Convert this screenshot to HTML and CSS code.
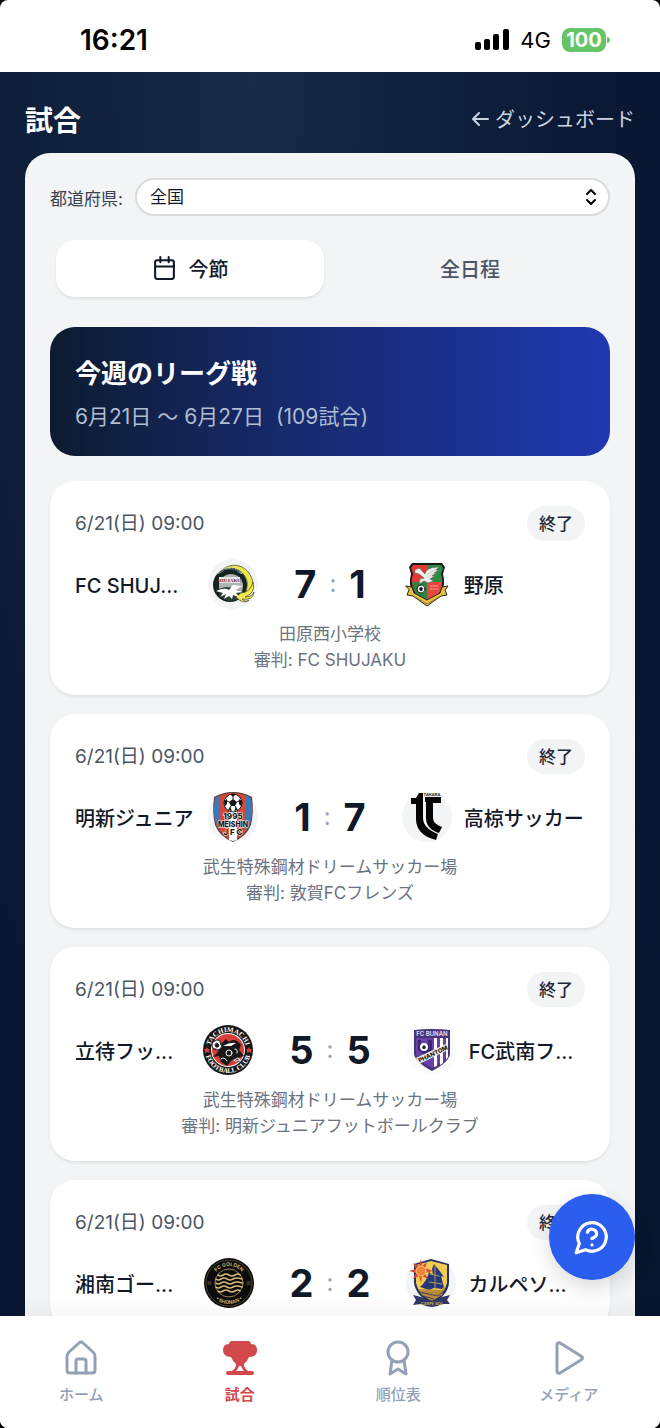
FILE: index.html
```html
<!DOCTYPE html>
<html lang="ja">
  <head>
    <meta charset="UTF-8" />
    <meta name="viewport" content="width=device-width, initial-scale=1.0" />
    <title>試合</title>
    <link rel="stylesheet" href="styles.css">
  </head>
  <body>
    <div class="screen">
      <div class="status-bar">
        <span class="clock">16:21</span>
        <div class="status-icons">
          <svg class="signal" viewBox="0 0 34 22" aria-hidden="true">
            <rect x="0" y="13" width="6" height="8" rx="2" />
            <rect x="9" y="10" width="6" height="11" rx="2" />
            <rect x="18" y="5" width="6" height="16" rx="2" />
            <rect x="28" y="0" width="6" height="21" rx="2" />
          </svg>
          <span class="network">4G</span>
          <span class="battery">100</span>
        </div>
      </div>

      <div class="app">
        <header class="page-header">
          <h1>試合</h1>
          <a href="#" class="back-link">
            <svg viewBox="0 0 18 18" aria-hidden="true"><path d="M17 9H2M8 3L2 9l6 6" /></svg>
            ダッシュボード
          </a>
        </header>

        <main class="sheet">
          <div class="filter">
            <label for="prefecture">都道府県:</label>
            <div class="select-wrap">
              <select id="prefecture">
                <option>全国</option>
              </select>
              <svg viewBox="0 0 12 18" aria-hidden="true"><path d="M2 6l4-4 4 4M2 12l4 4 4-4" /></svg>
            </div>
          </div>

          <div class="tabs">
            <button type="button" class="tab active">
              <svg viewBox="0 0 24 24" aria-hidden="true">
                <rect x="3" y="4" width="18" height="18" rx="2" />
                <path d="M8 1v5M16 1v5M3 10h18" />
              </svg>
              今節
            </button>
            <button type="button" class="tab">全日程</button>
          </div>

          <section class="hero">
            <h2>今週のリーグ戦</h2>
            <p><span>6月21日 〜 6月27日</span><span>(109試合)</span></p>
          </section>

          <div class="matches">
            <article class="match">
              <div class="match-top">
                <time>6/21(日) 09:00</time>
                <span class="badge">終了</span>
              </div>
              <div class="match-row">
                <div class="team home">
                  <span class="name">FC SHUJ...</span>
                  <svg class="crest" viewBox="0 0 50 50" aria-hidden="true">
                    <defs><path id="arc1" d="M10 17A14 14 0 0 1 34 17" /></defs>
                    <circle cx="25" cy="25" r="25" fill="#f3f4f6" />
                    <path d="M10 16C16 5 32 2 41 14C48 24 45 34 35 36C42 28 40 18 32 12C24 7 16 9 10 16Z" fill="#ede64a" stroke="#3c3d20" stroke-width=".7" />
                    <circle cx="22" cy="26" r="17" fill="#17231f" />
                    <circle cx="23" cy="27" r="12" fill="#aeb4b1" />
                    <path d="M10 31Q16 26 25 29L36 34Q31 42 22 42Q13 41 10 31Z" fill="#2c3f39" />
                    <path d="M33 34Q42 34 45 23Q48 34 37 38Q44 38 46 33Q45 42 34 40Q39 44 41 41Q35 46 28 38Z" fill="#f0e84f" stroke="#44451d" stroke-width=".7" />
                    <path d="M8 32Q17 28 21 31L25 26L34 27L28 31L35 33L28 34L31 38L25 36L24 40L21 37L16 40L18 35L12 38L15 34Z" fill="#fff" />
                    <rect x="11" y="18" width="21" height="6" fill="#e8e5e8" />
                    <text x="21" y="23" font-size="5" font-weight="700" text-anchor="middle" fill="#6b1f35" class="serif">SHUJAKU</text>
                    <text font-size="3" fill="#d8dcda" font-weight="700" text-anchor="middle"><textPath href="#arc1" startOffset="50%">FOOTBALL CLUB</textPath></text>
                  </svg>
                </div>
                <div class="score"><b>7</b><i>:</i><b>1</b></div>
                <div class="team">
                  <svg class="crest" viewBox="0 0 50 50" aria-hidden="true">
                    <path d="M10 4H40L43 8L41 15Q44 26 39 34Q35 40 25 46Q15 40 11 34Q6 26 9 15L7 8Z" fill="#151a17" />
                    <path d="M11 6H25V43Q14 37 12 31Q8 23 11 15L9 9Z" fill="#df3930" />
                    <path d="M25 6H39L41 9L39 15Q42 23 38 32L25 43Z" fill="#2f8a43" />
                    <path d="M10 23H25V43Q14 37 12 31Z" fill="#2d8441" />
                    <path d="M25 23H40Q40 30 37 34L25 43Z" fill="#e6473a" />
                    <path d="M4 27L10 28L12 34L25 41L38 34L40 28L46 27L43 31L45 36L39 37L25 47L11 37L5 36L7 31Z" fill="#e9c14a" stroke="#29251a" stroke-width="1" />
                    <path d="M13 38L25 45L37 38" fill="none" stroke="#947021" stroke-width="1" stroke-dasharray="2 1" />
                    <path d="M13 11Q18 7 20 12L23 15Q24 8 37 8L34 11H37L32 14H35L30 17H33L28 20L32 22L26 24L22 22L17 25L18 20L22 19L17 15L13 14Z" fill="#eee" stroke="#59615c" stroke-width=".6" />
                    <path d="M25 16L34 10M26 18L33 14" stroke="#a8b0ac" stroke-width=".6" />
                    <circle cx="19" cy="30" r="4" fill="#fff" stroke="#151a17" />
                    <path d="M19 28L21 29L20 32H18L17 29Z" fill="#151a17" />
                    <path d="M28 27H37M28 30H36" stroke="#f4a69c" stroke-dasharray="2 1" />
                  </svg>
                  <span class="name">野原</span>
                </div>
              </div>
              <p class="venue">田原西小学校<br>審判: FC SHUJAKU</p>
            </article>

            <article class="match">
              <div class="match-top">
                <time>6/21(日) 09:00</time>
                <span class="badge">終了</span>
              </div>
              <div class="match-row">
                <div class="team home">
                  <span class="name">明新ジュニア</span>
                  <svg class="crest" viewBox="0 0 50 50" aria-hidden="true">
                    <circle cx="25" cy="25" r="25" fill="#f3f4f6" />
                    <path d="M25 0Q35 0 44 5Q46 20 43 33Q38 45 25 50Q12 45 7 33Q4 20 6 5Q15 0 25 0Z" fill="#5a3d36" />
                    <path d="M25 1Q34 1 43 6Q45 20 42 32Q37 44 25 49Q13 44 8 32Q5 20 7 6Q16 1 25 1Z" fill="#d4473a" />
                    <path d="M7 6L12 3V39Q5 29 6 16Z" fill="#3c78b8" />
                    <path d="M43 6L38 3V39Q45 29 44 16Z" fill="#3c78b8" />
                    <path d="M21 18H29V48L25 49L21 48Z" fill="#fff" />
                    <circle cx="25" cy="11" r="9" fill="#fff" stroke="#171717" />
                    <path d="M25 7L29 10L27 14H23L21 10ZM22 2H28L25 5ZM16 9L19 7V12L17 14ZM34 9L31 7V12L33 14ZM20 18L22 15L24 19ZM30 18L28 15L26 19Z" fill="#151515" />
                    <path d="M25 5V7M19 9L21 10M31 9L29 10M23 14L22 16M27 14L28 16" stroke="#151515" />
                    <g font-weight="800" text-anchor="middle" fill="#161616" stroke="#fff" stroke-width="1" paint-order="stroke">
                      <text x="25" y="27" font-size="8">1995</text>
                      <text x="25" y="35" font-size="7">MEISHIN</text>
                      <text x="25" y="43" font-size="8">J F C</text>
                    </g>
                  </svg>
                </div>
                <div class="score"><b>1</b><i>:</i><b>7</b></div>
                <div class="team">
                  <svg class="crest" viewBox="0 0 50 50" aria-hidden="true">
                    <circle cx="25" cy="25" r="25" fill="#f3f4f6" />
                    <path d="M9 6H14L17 1H21V26Q21 36 36 42L34 48Q14 43 14 27V12H9Z" fill="#050505" />
                    <path d="M23 5H39V11H31V26Q31 32 40 35L37 41Q24 37 24 26V10H23Z" fill="#050505" />
                    <text x="30" y="4" font-size="4" font-weight="700" text-anchor="middle" fill="#222">TAKARA</text>
                  </svg>
                  <span class="name">高椋サッカー</span>
                </div>
              </div>
              <p class="venue">武生特殊鋼材ドリームサッカー場<br>審判: 敦賀FCフレンズ</p>
            </article>

            <article class="match">
              <div class="match-top">
                <time>6/21(日) 09:00</time>
                <span class="badge">終了</span>
              </div>
              <div class="match-row">
                <div class="team home">
                  <span class="name">立待フッ...</span>
                  <svg class="crest" viewBox="0 0 50 50" aria-hidden="true">
                    <defs>
                      <path id="arc2" d="M7 25A18 18 0 0 1 43 25" />
                      <path id="arc3" d="M2 25A23 23 0 0 0 48 25" />
                    </defs>
                    <circle cx="25" cy="25" r="25" fill="#171717" />
                    <circle cx="25" cy="25" r="17" fill="#fff" />
                    <circle cx="25" cy="25" r="16" fill="#d93d38" />
                    <g font-size="7" font-weight="800" fill="#fff" text-anchor="middle" class="serif">
                      <text><textPath href="#arc2" startOffset="50%">TACHIMACHI</textPath></text>
                      <text><textPath href="#arc3" startOffset="50%">FOOTBALL CLUB</textPath></text>
                    </g>
                    <path d="M4 22L5 24H7L6 26L7 28L4 27L2 28V26L1 24H3ZM46 22L47 24H49L48 26L49 28L46 27L44 28V26L43 24H45Z" fill="#df3d38" />
                    <path d="M17 20L23 14L26 17Q32 12 38 20L36 25L41 31L34 33L37 37L29 35L24 41L18 37L16 31L10 32L15 27Z" fill="#181818" />
                    <circle cx="14" cy="20" r="5" fill="#fff" stroke="#181818" />
                    <path d="M14 18L16 20L15 22H13L12 20ZM10 17L12 16M17 17L18 20M11 24L13 24" fill="#181818" stroke="#181818" />
                    <path d="M20 21Q27 17 33 18L28 21Z" fill="#fff" />
                    <circle cx="26" cy="28" r="3" fill="#181818" stroke="#fff" />
                    <path d="M32 24Q35 24 34 28M18 34Q21 31 24 36M31 35L35 33L37 35L33 36Z" fill="none" stroke="#fff" />
                  </svg>
                </div>
                <div class="score"><b>5</b><i>:</i><b>5</b></div>
                <div class="team">
                  <svg class="crest" viewBox="0 0 50 50" aria-hidden="true">
                    <circle cx="25" cy="25" r="25" fill="#f9fafb" />
                    <path d="M7 5Q25 3 43 5V29Q42 37 25 46Q8 37 7 29Z" fill="#4a3479" />
                    <path d="M9 13H41V29Q40 35 25 43Q10 35 9 29Z" fill="#6940a7" />
                    <path d="M27 13H30V41L27 42ZM33 13H36V38L33 40ZM39 13H41V32L39 35Z" fill="#fff" />
                    <path d="M11 15H14V19H21V15H25V25L18 30L11 25Z" fill="#3b2675" />
                    <circle cx="17" cy="22" r="4" fill="#fff" />
                    <path d="M17 20L19 22L18 24H16L15 22Z" fill="#222" />
                    <path d="M9 33L41 18V25L12 39Z" fill="#f5f0ef" />
                    <text x="25" y="11" font-size="6" font-weight="700" text-anchor="middle" fill="#ded5ec">FC BUNAN</text>
                    <text x="26" y="31" font-size="6" font-weight="800" text-anchor="middle" fill="#202020" transform="rotate(-25 26 29)">PHANTOM</text>
                  </svg>
                  <span class="name">FC武南フ...</span>
                </div>
              </div>
              <p class="venue">武生特殊鋼材ドリームサッカー場<br>審判: 明新ジュニアフットボールクラブ</p>
            </article>

            <article class="match">
              <div class="match-top">
                <time>6/21(日) 09:00</time>
                <span class="badge">終了</span>
              </div>
              <div class="match-row">
                <div class="team home">
                  <span class="name">湘南ゴー...</span>
                  <svg class="crest" viewBox="0 0 50 50" aria-hidden="true">
                    <defs>
                      <path id="arc4" d="M8 25A17 17 0 0 1 42 25" />
                      <path id="arc5" d="M4 25A21 21 0 0 0 46 25" />
                    </defs>
                    <circle cx="25" cy="25" r="25" fill="#0b0b0b" />
                    <circle cx="25" cy="25" r="23" fill="none" stroke="#6d5c36" stroke-width=".7" />
                    <circle cx="25" cy="25" r="14" fill="none" stroke="#c2a162" stroke-width=".8" />
                    <path d="M14 17Q16 19 19 17T25 17T31 17T36 17M12 21Q14 23 17 21T23 21T29 21T38 21M12 25Q14 27 17 25T23 25T29 25T38 25M12 29Q14 31 17 29T23 29T29 29T38 29M14 33Q16 35 19 33T25 33T31 33T36 33" fill="none" stroke="#d7b979" stroke-width="1.6" />
                    <g font-size="5" font-weight="700" fill="#cfb06e" text-anchor="middle">
                      <text><textPath href="#arc4" startOffset="50%">FC GOLDEN</textPath></text>
                      <text><textPath href="#arc5" startOffset="50%">• SHONAN •</textPath></text>
                    </g>
                    <path d="M4 24H7M4 26H7M43 24H46M43 26H46" stroke="#7d6b42" stroke-width=".8" />
                  </svg>
                </div>
                <div class="score"><b>2</b><i>:</i><b>2</b></div>
                <div class="team">
                  <svg class="crest" viewBox="0 0 50 50" aria-hidden="true">
                    <circle cx="25" cy="25" r="25" fill="#f3f4f6" />
                    <path d="M8 6L25 1L43 6V25Q42 37 26 46Q10 38 8 25Z" fill="#25305f" />
                    <path d="M10 7L25 3L41 7V25Q39 35 26 43Q12 36 10 25Z" fill="#f3cd51" />
                    <path d="M28 6L33 12L38 19L35 18L38 29L36 31L28 30L23 32L14 29Q21 23 23 14L27 17L26 11Z" fill="#26387b" />
                    <path d="M29 7V35M23 24L36 26M24 16L33 18" stroke="#d0b24e" stroke-width=".8" />
                    <path d="M12 31L35 32L40 28L36 37L26 43L16 37Z" fill="#bc8b31" />
                    <path d="M13 34L32 38L38 33M17 38L28 41" stroke="#36406c" stroke-width="1" fill="none" />
                    <path d="M15 1L16 8L21 4L19 10L27 13L19 15L22 21L16 18L15 25L13 18L7 21L10 15L3 13L10 11L7 5L13 8Z" fill="#dc4637" />
                    <circle cx="15" cy="13" r="5" fill="#ef853c" stroke="#f7d36a" stroke-width="1" />
                    <path d="M7 37L15 39Q26 46 36 39L44 37L41 42L44 46L36 46Q26 52 15 46L7 47L10 42Z" fill="#303963" />
                    <text x="26" y="47" font-size="4" font-weight="700" text-anchor="middle" fill="#c8a64f">CARPE SOL</text>
                  </svg>
                  <span class="name">カルペソ...</span>
                </div>
              </div>
            </article>
          </div>
        </main>
      </div>

      <button type="button" class="help" aria-label="ヘルプ">
        <svg viewBox="0 0 24 24" aria-hidden="true">
          <path d="M7.9 20A9 9 0 1 0 4 16.1L2 22Z" />
          <path d="M9.1 9a3 3 0 0 1 5.8 1c0 2-3 3-3 3M12 17h.01" />
        </svg>
      </button>

      <nav class="bottom-nav">
        <a href="#">
          <svg viewBox="0 0 38 38" aria-hidden="true">
            <path d="M5 17Q5 15 7 13L17 4Q19 2 21 4L31 13Q33 15 33 17V31Q33 34 30 34H8Q5 34 5 31Z" />
            <path d="M14 34V22Q14 20 16 20H22Q24 20 24 22V34" />
          </svg>
          ホーム
        </a>
        <a href="#" class="active">
          <svg viewBox="0 0 38 38" aria-hidden="true">
            <path class="solid" d="M10 2H28Q29 2 30 5Q36 5 36 11Q36 18 28 18Q26 23 23 25V27Q24 30 27 32H31Q33 32 33 34Q33 36 31 36H7Q5 36 5 34Q5 32 7 32H11Q14 30 15 27V25Q12 23 10 18Q2 18 2 11Q2 5 8 5Q9 2 10 2ZM18 27Q17 30 15 32H23Q21 30 20 27Z" />
          </svg>
          試合
        </a>
        <a href="#">
          <svg viewBox="0 0 38 38" aria-hidden="true">
            <circle cx="19" cy="13" r="10" />
            <path d="M13 21L11 35L19 30L27 35L25 21" />
          </svg>
          順位表
        </a>
        <a href="#">
          <svg viewBox="0 0 38 38" aria-hidden="true">
            <path d="M7 6Q7 3 10 4L31 17Q34 19 31 21L10 34Q7 35 7 32Z" />
          </svg>
          メディア
        </a>
      </nav>
    </div>
  </body>
</html>
```

FILE: styles.css
```css
* {
  box-sizing: border-box;
}

body {
  margin: 0;
  background-color: #000;
  color: #111827;
  font-family: Inter, "Noto Sans CJK JP", sans-serif;
}

h1,
h2,
p {
  margin: 0;
}

a {
  text-decoration: none;
}

button,
select {
  font-family: inherit;
}

svg {
  flex-shrink: 0;
  fill: none;
  stroke-linecap: round;
  stroke-linejoin: round;
}

.screen {
  position: relative;
  display: flex;
  flex-direction: column;
  height: 100vh;
  overflow: hidden;
  border-radius: 8px;
  background-color: #fff;
}

/* Status bar */
.status-bar {
  display: flex;
  flex-shrink: 0;
  align-items: center;
  justify-content: space-between;
  height: 72px;
  padding: 8px 54px 0 80px;
  color: #000;
}

.clock {
  font-size: 28px;
  font-weight: 600;
}

.status-icons {
  display: flex;
  align-items: center;
  gap: 11px;
}

.signal {
  width: 34px;
  height: 22px;
  fill: #000;
}

.network {
  font-size: 22px;
}

.battery {
  position: relative;
  width: 44px;
  border-radius: 8px;
  background-color: #65c466;
  color: #fff;
  font-size: 20px;
  font-weight: 700;
  line-height: 24px;
  text-align: center;
}

.battery::after {
  content: "";
  position: absolute;
  top: 9px;
  right: -4px;
  width: 3px;
  height: 6px;
  border-radius: 0 3px 3px 0;
  background-color: #65c466;
}

/* App area */
.app {
  flex: 1;
  min-height: 0;
  overflow-y: auto;
  scrollbar-width: none;
  padding: 0 25px;
  background: radial-gradient(ellipse at 38% 0, #162c47 0, #0b1834 60%, #07152f 100%);
}

.page-header {
  display: flex;
  align-items: center;
  justify-content: space-between;
  height: 81px;
  padding-top: 12px;
}

h1 {
  color: #fff;
  font-size: 28px;
  font-weight: 700;
}

.back-link {
  display: flex;
  align-items: center;
  gap: 6px;
  color: #cbd5e1;
  font-size: 20px;
}

.back-link svg {
  width: 18px;
  height: 18px;
  stroke: currentColor;
  stroke-width: 2;
}

.sheet {
  padding: 25px;
  border-radius: 25px 25px 0 0;
  background-color: #f2f4f6;
}

.filter {
  display: flex;
  align-items: center;
  gap: 12px;
}

.filter label {
  color: #374151;
  font-size: 17px;
}

.select-wrap {
  display: grid;
  flex: 1;
  align-items: center;
}

.select-wrap select,
.select-wrap svg {
  grid-area: 1 / 1;
}

.select-wrap select {
  appearance: none;
  width: 100%;
  height: 38px;
  padding: 0 13px;
  border: 2px solid #d9dbde;
  border-radius: 19px;
  background-color: #fff;
  color: #111827;
  font-size: 17px;
}

.select-wrap svg {
  justify-self: end;
  width: 12px;
  height: 18px;
  margin-right: 13px;
  stroke: #000;
  stroke-width: 2;
  pointer-events: none;
}

.tabs {
  display: grid;
  grid-template-columns: 1fr 1fr;
  gap: 12px;
  margin: 18px 0 24px;
  padding: 6px;
}

.tab {
  display: flex;
  align-items: center;
  justify-content: center;
  gap: 12px;
  height: 57px;
  border: none;
  border-radius: 19px;
  background: none;
  color: #4b5563;
  font-size: 20px;
  font-weight: 500;
  cursor: pointer;
}

.tab.active {
  background-color: #fff;
  color: #111827;
  box-shadow: 0 2px 3px rgba(0, 0, 0, 0.08);
}

.tab svg {
  width: 25px;
  height: 25px;
  stroke: currentColor;
  stroke-width: 2;
}

.hero {
  padding: 26px 25px 24px;
  border-radius: 25px;
  background: linear-gradient(to right, #0d1b2f 0, #14265c 30%, #2038b1 100%);
  color: #fff;
}

.hero h2 {
  font-size: 26px;
  font-weight: 700;
  line-height: 42px;
}

.hero p {
  display: flex;
  gap: 12px;
  margin-top: 6px;
  color: #b0bdd2;
  font-size: 21px;
  line-height: 31px;
}

/* Match cards */
.matches {
  display: grid;
  gap: 19px;
  margin-top: 25px;
}

.match {
  padding: 25px 25px 22px;
  border-radius: 25px;
  background-color: #fff;
  box-shadow: 0 2px 3px rgba(0, 0, 0, 0.08);
}

.match-top {
  display: flex;
  align-items: center;
  justify-content: space-between;
  color: #4b5563;
  font-size: 19px;
}

.match-top time {
  line-height: 28px;
}

.badge {
  padding: 1px 12px 0;
  border-radius: 18px;
  background-color: #f3f4f6;
  color: #1f2937;
  font-size: 17px;
  font-weight: 500;
  line-height: 34px;
}

.match-row {
  display: flex;
  align-items: center;
  margin-top: 18px;
}

.team {
  display: flex;
  flex: 1;
  align-items: center;
  gap: 12px;
  min-width: 0;
}

.team.home {
  justify-content: space-between;
}

.name {
  padding-top: 3px;
  color: #111827;
  font-size: 20px;
  font-weight: 500;
  line-height: 30px;
  white-space: nowrap;
}

.crest {
  width: 50px;
  height: 50px;
}

.crest text {
  stroke-linejoin: miter;
}

.crest .serif {
  font-family: "Liberation Serif", serif;
}

.score {
  display: flex;
  align-items: center;
  gap: 13px;
  padding: 0 36px;
  color: #111827;
  font-size: 38px;
  line-height: 50px;
}

.score b {
  font-weight: 700;
}

.score i {
  color: #9ca3af;
  font-size: 24px;
  font-style: normal;
}

.venue {
  margin-top: 12px;
  color: #6b7280;
  font-size: 17px;
  line-height: 26px;
  text-align: center;
}

/* Help button */
.help {
  position: absolute;
  right: 25px;
  bottom: 148px;
  display: grid;
  place-items: center;
  width: 86px;
  height: 86px;
  border: none;
  border-radius: 50%;
  background-color: #2b5def;
  box-shadow: 0 8px 20px rgba(0, 0, 0, 0.14);
  cursor: pointer;
}

.help svg {
  width: 38px;
  height: 38px;
  stroke: #fff;
  stroke-width: 2;
}

/* Bottom navigation */
.bottom-nav {
  z-index: 1;
  display: grid;
  flex-shrink: 0;
  grid-template-columns: 1fr 1fr 1fr 1.15fr;
  height: 112px;
  padding: 23px 0 0 2px;
  background-color: #fff;
  box-shadow: 0 -4px 20px rgba(0, 0, 0, 0.05);
}

.bottom-nav a {
  display: flex;
  flex-direction: column;
  align-items: center;
  gap: 7px;
  color: #94a0b5;
  font-size: 15px;
  font-weight: 500;
  line-height: 22px;
}

.bottom-nav svg {
  width: 38px;
  height: 38px;
  stroke: currentColor;
  stroke-width: 3;
}

.bottom-nav .active {
  color: #d3484a;
  font-weight: 700;
}

.bottom-nav .solid {
  fill: currentColor;
  fill-rule: evenodd;
  stroke: none;
}
```
